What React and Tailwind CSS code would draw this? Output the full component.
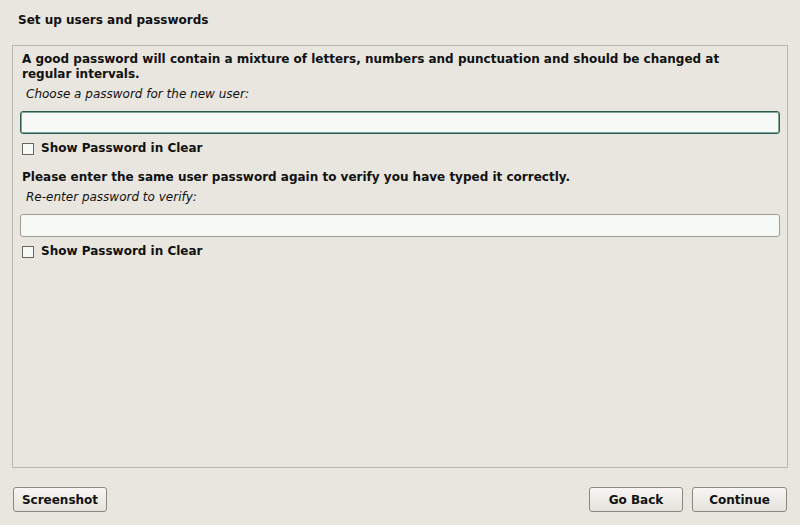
import React, { useState } from 'react';

function Check({ checked, onChange, label }) {
  return (
    <label className="flex items-center h-[15px] pl-[7px] cursor-default select-none">
      <span
        onClick={onChange}
        className="w-[12px] h-[12px] border border-[#6b6760] bg-[#f6faf7] flex items-center justify-center text-[10px] leading-none"
      >
        {checked ? '✓' : ''}
      </span>
      <span className="ml-[7px] font-bold">{label}</span>
    </label>
  );
}

export default function App() {
  const [pw, setPw] = useState('');
  const [pw2, setPw2] = useState('');
  const [show1, setShow1] = useState(false);
  const [show2, setShow2] = useState(false);

  const btn =
    'h-[25px] rounded-[3px] border border-[#8c887f] bg-gradient-to-b from-[#f7f6f3] to-[#e4e2db] font-bold text-[12px] text-[#111] leading-none';

  return (
    <div className="w-[800px] h-[525px] bg-[#e8e6df] text-[12px] leading-[15px] text-[#111] flex flex-col font-['DejaVu_Sans',sans-serif]">
      <h1 className="font-bold pl-[18px] pt-[13px] h-[45px]">Set up users and passwords</h1>

      <div className="mx-[12px] h-[423px] border border-[#bab6ac] pr-[7px] pl-[7px] pt-[6px]">
        <p className="font-bold pl-[2px] max-w-[712px]">
          A good password will contain a mixture of letters, numbers and punctuation and should be changed at regular intervals.
        </p>
        <p className="italic pl-[6px] mt-[5px]">Choose a password for the new user:</p>
        <input
          type={show1 ? 'text' : 'password'}
          value={pw}
          onChange={(e) => setPw(e.target.value)}
          className="mt-[9px] w-full h-[23px] rounded-[3px] border border-[#2d5c50] bg-[#f6faf7] shadow-[inset_0_0_0_1px_#7fa89c] outline-none px-1"
        />
        <div className="mt-[7px] -ml-[7px] pl-[2px]">
          <Check checked={show1} onChange={() => setShow1(!show1)} label="Show Password in Clear" />
        </div>

        <p className="font-bold pl-[2px] mt-[14px]">
          Please enter the same user password again to verify you have typed it correctly.
        </p>
        <p className="italic pl-[6px] mt-[5px]">Re-enter password to verify:</p>
        <input
          type={show2 ? 'text' : 'password'}
          value={pw2}
          onChange={(e) => setPw2(e.target.value)}
          className="mt-[9px] w-full h-[23px] rounded-[3px] border border-[#a19d94] bg-[#f6faf7] outline-none px-1"
        />
        <div className="mt-[7px] -ml-[7px] pl-[2px]">
          <Check checked={show2} onChange={() => setShow2(!show2)} label="Show Password in Clear" />
        </div>
      </div>

      <div className="flex mt-[19px] pl-[13px] pr-[13px]">
        <button className={`${btn} w-[94px]`}>Screenshot</button>
        <div className="flex-1" />
        <button className={`${btn} w-[94px]`}>Go Back</button>
        <button className={`${btn} w-[95px] ml-[9px]`}>Continue</button>
      </div>
    </div>
  );
}
